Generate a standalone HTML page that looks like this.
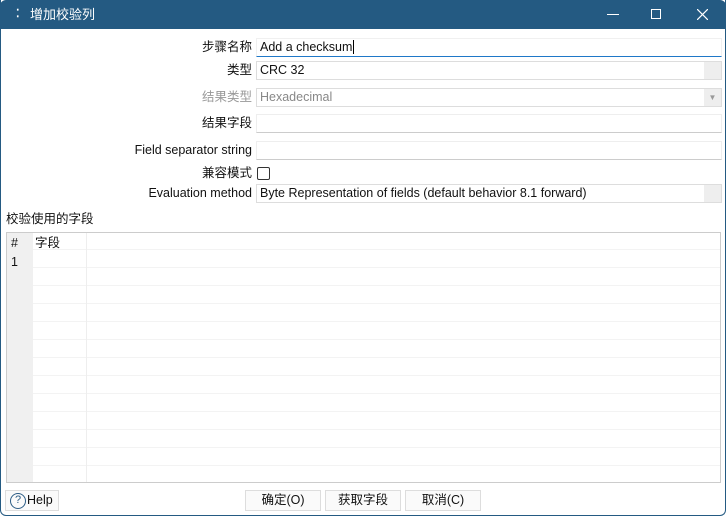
<!DOCTYPE html>
<html><head><meta charset="utf-8"><style>
*{box-sizing:border-box;margin:0;padding:0}
body{width:726px;height:516px;overflow:hidden;background:#fff;font-family:"Liberation Sans","Noto Sans CJK SC",sans-serif;font-size:12.5px;line-height:17px;color:#111;position:relative}
.win{position:absolute;left:0;top:0;width:726px;height:516px;border:1px solid #245a82;border-top:none;border-radius:0 0 6px 6px}
.tb{position:absolute;left:0;top:0;width:726px;height:29px;background:#245a82;color:#fff;border-radius:6px 6px 0 0}
.lbl{position:absolute;right:474px;text-align:right;white-space:nowrap;height:17px}
.f{position:absolute;left:256px;width:466px;height:19px;border:1px solid #ddd;padding-left:3px;line-height:17px;white-space:nowrap}
.abs{position:absolute}
.btn{position:absolute;top:490px;height:21px;border:1px solid #ddd;background:#fafafa;text-align:center;line-height:19px;white-space:nowrap}
</style></head><body>
<div class="win"></div>
<div class="tb">
<div class="abs" style="left:16px;top:6px;font-size:11px;font-weight:bold">⁚</div>
<div class="abs" style="left:30px;top:6px;font-size:13px">增加校验列</div>
<div class="abs" style="left:607px;top:14px;width:12px;height:1px;background:#fff"></div>
<div class="abs" style="left:651px;top:9px;width:10px;height:10px;border:1px solid #fff"></div>
<svg class="abs" style="left:697px;top:9px" width="11" height="11"><path d="M0 0L11 11M11 0L0 11" stroke="#fff" stroke-width="1.2"/></svg>
</div>
<div class="lbl" style="top:39px">步骤名称</div>
<div class="f" style="top:38px;border-color:#f0f0f0;border-bottom:1px solid #1f78c8">Add a checksum<span style="border-left:1px solid #000;margin-left:1px"></span></div>
<div class="lbl" style="top:62px">类型</div>
<div class="f" style="top:61px">CRC 32<div class="abs" style="right:0;top:0;width:17px;height:17px;background:#eee"></div></div>
<div class="lbl" style="top:89px;color:#999">结果类型</div>
<div class="f" style="top:88px;color:#888">Hexadecimal<div class="abs" style="right:0;top:0;width:17px;height:17px;background:#eee;color:#999;font-size:8px;text-align:center">▼</div></div>
<div class="lbl" style="top:115px">结果字段</div>
<div class="f" style="top:114px;border-color:#eee;border-bottom-color:#ccc"></div>
<div class="lbl" style="top:142px">Field separator string</div>
<div class="f" style="top:141px;border-color:#eee;border-bottom-color:#ccc"></div>
<div class="lbl" style="top:165px">兼容模式</div>
<div class="abs" style="left:257px;top:167px;width:13px;height:13px;border:1px solid #333;border-radius:2px"></div>
<div class="lbl" style="top:185px">Evaluation method</div>
<div class="f" style="top:184px">Byte Representation of fields (default behavior 8.1 forward)<div class="abs" style="right:0;top:0;width:17px;height:17px;background:#eee"></div></div>
<div class="abs" style="left:6px;top:211px">校验使用的字段</div>
<div class="abs" style="left:6px;top:232px;width:715px;height:251px;border:1px solid #ccc;overflow:hidden;background:repeating-linear-gradient(#fff 0 17px,#f3f3f3 17px 18px) 0 -1px">
<div class="abs" style="left:0;top:0;width:26px;height:250px;background:#f0f0f0"></div>
<div class="abs" style="left:79px;top:0;width:1px;height:250px;background:#eee"></div>
<div class="abs" style="left:4px;top:2px">#</div>
<div class="abs" style="left:28px;top:2px">字段</div>
<div class="abs" style="left:4px;top:21px">1</div>
</div>
<div class="btn" style="left:5px;width:54px;display:flex;align-items:center;padding-left:4px"><span style="display:inline-block;width:16px;height:16px;border:1.5px solid #2d5d86;border-radius:50%;font-size:11px;line-height:13px;text-align:center;color:#2d5d86;margin-right:1px">?</span>Help</div>
<div class="btn" style="left:245px;width:76px">确定(O)</div>
<div class="btn" style="left:325px;width:76px">获取字段</div>
<div class="btn" style="left:405px;width:76px">取消(C)</div>
</body></html>
